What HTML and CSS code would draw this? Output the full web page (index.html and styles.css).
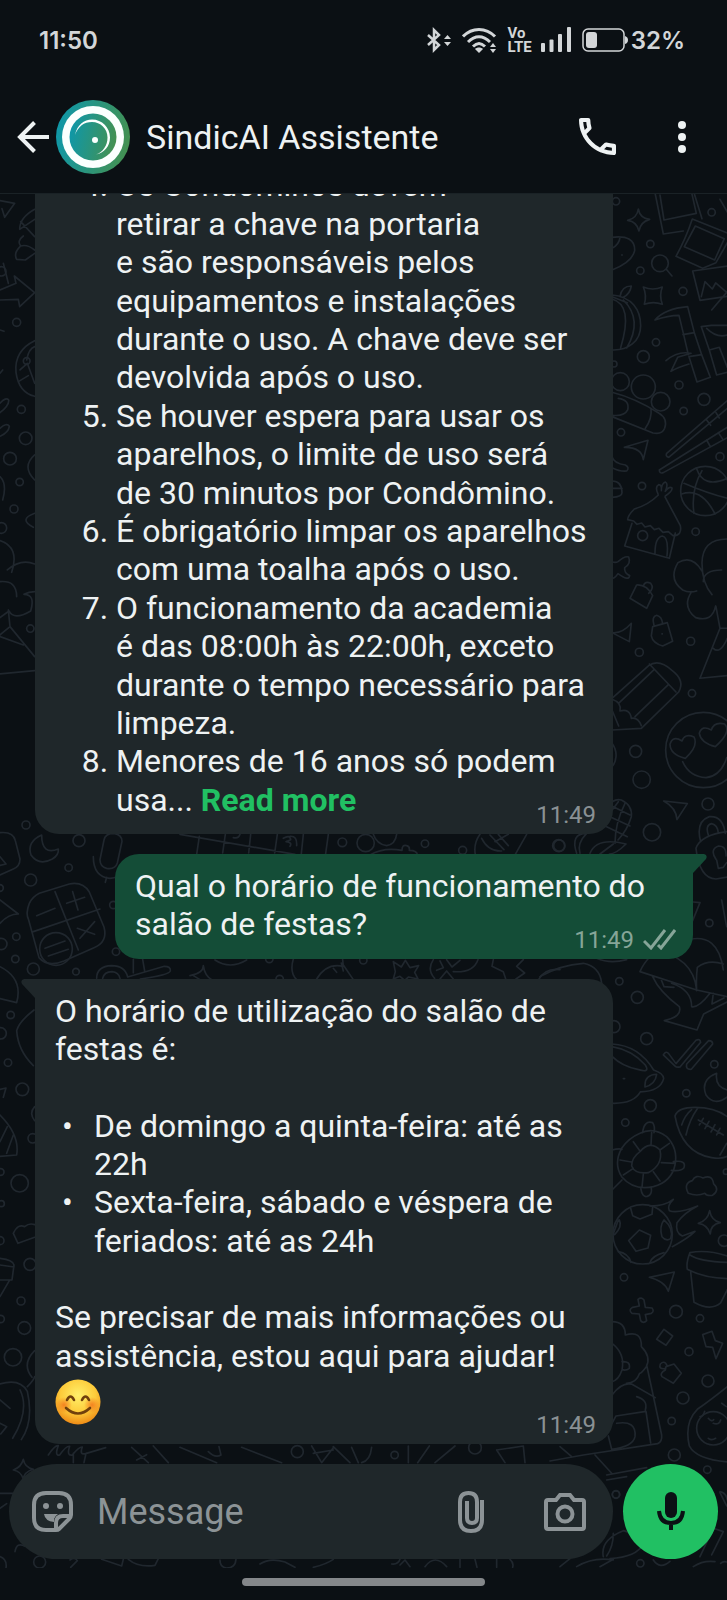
FILE: index.html
```html
<!DOCTYPE html>
<html lang="pt-BR">
<head>
    <meta charset="UTF-8">
    <meta name="viewport" content="width=device-width, initial-scale=1.0">
    <title>SindicAI Assistente</title>
    <link rel="stylesheet" href="styles.css">
</head>
<body>
    <div class="status-bar">
        <span>11:50</span>
        <div class="status-icons">
            <svg class="icon-bluetooth" viewBox="0 0 24 26" fill="none" stroke="currentColor" stroke-width="2.500">
                <path d="M1 8l11 10-5 5V3l5 5L1 18"/>
                <path d="M17 12l3.500-4 3.500 4zM17 15l3.500 4 3.500-4z" fill="currentColor" stroke="none"/>
            </svg>
            <svg class="icon-wifi" viewBox="0 0 35 26" fill="none" stroke="currentColor" stroke-width="3">
                <path d="M1 9.500c9-9.500 23-9.500 32 0M6 15c7-7 15-7 22 0M11 19.500c4-4 8-4 12 0"/>
                <path d="M13 22c2-2 6-2 8 0l-4 4zM28 20l3-4 3 4zM28 22l3 4 3-4z" fill="currentColor" stroke="none"/>
            </svg>
            <span class="volte">Vo<br>LTE</span>
            <svg class="icon-signal" viewBox="0 0 30 26" fill="currentColor">
                <rect y="16" width="4" height="9" rx="1"/>
                <rect x="8.500" y="12.500" width="4" height="12.500" rx="1"/>
                <rect x="17" y="7" width="4" height="18" rx="1"/>
                <rect x="26" width="4" height="25" rx="1"/>
            </svg>
            <svg class="icon-battery" viewBox="0 0 46 24">
                <rect x="1" y="1" width="41" height="22" rx="5" fill="none" stroke="currentColor" stroke-width="1.500"/>
                <rect x="4" y="4" width="11" height="16" rx="3" fill="currentColor"/>
                <path d="M43 8q3 1 3 4t-3 4z" fill="currentColor"/>
            </svg>
            <span>32%</span>
        </div>
    </div>

    <header class="chat-header">
        <button class="icon-button" type="button" aria-label="Voltar">
            <svg class="icon-back" viewBox="0 0 32 32" fill="none" stroke="currentColor" stroke-width="4">
                <path d="M32 16H3M17.500 1.500L3 16l14.500 14.500"/>
            </svg>
        </button>
        <svg class="avatar" viewBox="0 0 74 74">
            <defs>
                <linearGradient id="brand" x1="0" y1="0.400" x2="1" y2="0.600">
                    <stop offset="0" stop-color="#0f97a8"/>
                    <stop offset="1" stop-color="#459150"/>
                </linearGradient>
            </defs>
            <circle cx="37" cy="37" r="37" fill="url(#brand)"/>
            <circle cx="37" cy="37" r="31" fill="#fbfffe"/>
            <circle cx="37" cy="37" r="23.500" fill="url(#brand)"/>
            <path d="M19 35C21 25 28 19.500 36 19.500c10 0 18 8 18 18 0 9-6 15.500-14 17 7-2.500 11.500-9 11.500-17 0-9-7-15.500-15.500-15.500-8 0-14 4.500-17 13z" fill="#fbfffe"/>
            <circle cx="39" cy="40" r="3" fill="#fbfffe"/>
        </svg>
        <h1 class="contact-name">SindicAI Assistente</h1>
        <button class="icon-button" type="button" aria-label="Ligar">
            <svg class="icon-phone" viewBox="3 3 18 18" fill="currentColor">
                <path d="M6.540 5c.06.890.210 1.760.450 2.590l-1.200 1.200c-.410-1.200-.670-2.470-.760-3.790h1.510m9.860 12.020c.850.240 1.720.390 2.600.450v1.490c-1.320-.090-2.590-.350-3.800-.750l1.200-1.190M7.500 3H4c-.550 0-1 .450-1 1 0 9.390 7.610 17 17 17 .550 0 1-.450 1-1v-3.490c0-.550-.450-1-1-1-1.240 0-2.450-.2-3.570-.570-.1-.040-.210-.050-.310-.050-.260 0-.510.1-.710.290l-2.200 2.200c-2.830-1.450-5.150-3.760-6.590-6.590l2.200-2.200c.280-.280.360-.670.250-1.020C8.700 6.450 8.500 5.250 8.500 4c0-.550-.450-1-1-1z"/>
            </svg>
        </button>
        <button class="icon-button menu-button" type="button" aria-label="Mais opções">
            <svg class="icon-menu" viewBox="0 0 10 32" fill="currentColor">
                <circle cx="5" cy="4" r="4"/>
                <circle cx="5" cy="16" r="4"/>
                <circle cx="5" cy="28" r="4"/>
            </svg>
        </button>
    </header>

    <main class="chat">
        <svg class="wallpaper" viewBox="0 194 727 1374" preserveAspectRatio="xMidYMid slice" aria-hidden="true">
            <!-- right side, top -->
            <g transform="translate(540 190) scale(.3333)">
                <circle cx="228" cy="34" r="11"/><circle cx="515" cy="67" r="11"/><circle cx="331" cy="162" r="11"/>
                <circle cx="301" cy="242" r="11"/><circle cx="429" cy="304" r="12"/><circle cx="348" cy="457" r="11"/>
                <circle cx="310" cy="500" r="18"/><circle cx="417" cy="585" r="12"/><circle cx="492" cy="628" r="18"/>
                <circle cx="431" cy="663" r="11"/><circle cx="243" cy="727" r="11"/><circle cx="540" cy="800" r="12"/>
                <circle cx="306" cy="888" r="11"/><circle cx="467" cy="1025" r="11"/><circle cx="388" cy="1225" r="12"/>
                <circle cx="452" cy="1354" r="12"/><circle cx="298" cy="1387" r="12"/><circle cx="222" cy="522" r="9"/>
                <path d="M295 57q5 28 34 31-28 8-32 35-6-28-34-32 28-6 32-34z"/>
                <path d="M345 8l25 124 60-9M462 8l24 78M360 15l12 75 97-20-14-62"/>
                <path d="M457 87l105 42M457 87q-20 60-49 112l80 36 40-17 34-60M466 108l87 38-29 64-91-40z"/>
                <path d="M540 28l22 38M562 228l-104 15 22 88 82-12M484 320l11-45 22 22 10-18 35 30M515 360l47-55"/>
                <circle cx="360" cy="220" r="25"/><path d="M379 238l17 20"/>
                <path d="M310 291q28 12 57 0-10 25 0 52-27-10-54 0 8-27-3-52z"/>
                <path d="M216 142q70-8 68 40-8 35-68 58M216 175q22-12 24-33M245 195h2"/>
                <path d="M216 315c60 5 86 45 86 92s-38 75-86 73M216 327q65 18 26 146M250 330q60 60 10 144M240 320q5-32 34-32-4 24-24 34M216 320l46 18"/>
                <path d="M345 390q30-34 98-40l20 78-34 6M345 390q40-14 72-14l14 58 14 60M463 428l22 66-38 6 24 76 40-14-26-68M378 512q35-30 75-22l-40 12-20 42q20-12 54-22M484 410l24 70 22 75 32-8M484 410l30-4 48 0M500 415q30 30 62 20M508 480l30-8 24 60"/>
                <circle cx="241" cy="575" r="27"/><circle cx="310" cy="591" r="36"/><circle cx="362" cy="635" r="28"/>
                <path d="M216 607q70 18 140 62 28 16 18 46-8 20-35 14l-123-49M235 625q35 5 28 35-10 20-46 16M333 655q4 30-17 60"/>
                <path d="M562 632L380 790q-4 10 6 12L562 655M562 712L358 840q0 12 12 8l192-105M500 690l12 16M528 668l10 16M500 750l10 18M535 728l12 18"/>
                <path d="M253 772l71-21-14 58q-5-38-57-37z"/>
                <path d="M216 800q5 20 40 25 14 8 4 18-20 2-44-10M216 873q30 0 30 35 0 12-30 14M216 895h30"/>
                <circle cx="496" cy="903" r="74"/>
                <path d="M432 880q70 30 130 45M470 836q20 60 90 30M425 912q60-20 100 60M462 970q-10-70 24-128"/>
                <path d="M355 915q-30 30-72 42-20 20-20 32l18 4 10 10 14-4 10 12 16-4 12 12 14-4 12 12 16-2 14 12q28 0 22-30l-46-86M354 912q-10-22 2-28 10 0 8 18 0-22 12-26 10 4 0 28 12-16 20-10 2 10-20 24M276 1000l-22 68 134 37 18-76M345 1090q0-48 22-52 20 4 14 60"/>
                <circle cx="308" cy="1037" r="15"/>
                <path d="M216 1115q10 5 18 0 20-18 32-14 8 20-12 32-2 16 15 24-2 18-35-6-14 20-18 10"/>
                <path d="M562 1047q-75 0-76 72 0 60 30 95M486 1143q-30-50-72-25-30 50 14 82 20 10 42 3M455 1205q-30 45 12 78 50 15 60-35M490 1175q0-35 55-35M528 1250l12 65h22M540 1315l-60 150 82-8M520 1375q20 20 42-30"/>
                <path d="M290 1185q30-2 48 32l-18 38-50-30zM310 1188q5-16 22-8 12 15-6 30"/>
                <path d="M338 1310l44-12 16 56-30 14q-30-8-34-30zM342 1306q-8-26 8-30 16 4 18 26M366 1332h1M216 1328q30 4 58-28l-6 55z"/>
            </g>
            <!-- right side, middle -->
            <g transform="translate(540 660) scale(.3333)">
                <circle cx="456" cy="100" r="11"/><circle cx="287" cy="274" r="18"/><circle cx="305" cy="359" r="26"/>
                <circle cx="504" cy="432" r="18"/><circle cx="336" cy="517" r="26"/><circle cx="58" cy="557" r="17"/>
                <circle cx="508" cy="789" r="11"/><circle cx="238" cy="964" r="11"/><circle cx="292" cy="1012" r="18"/>
                <circle cx="320" cy="1136" r="18"/><circle cx="523" cy="1213" r="11"/><circle cx="439" cy="1300" r="11"/>
                <circle cx="331" cy="1337" r="18"/><circle cx="256" cy="1388" r="11"/><circle cx="222" cy="1100" r="18"/>
                <path d="M216 115l110-98q30-22 70 14 40 30 20 65L304 205l-88 5M216 118q30 10 24 35 30-8 34 22 20-4 30 22M238 128l105-100M285 170l100-96M328 12l80 84M216 150l20 48"/>
                <circle cx="490" cy="270" r="113"/>
                <path d="M436 295q-45-10-46-42 8-28 36-10 8-24 36-12 14 28-26 64zM526 260q-44-12-48-40 8-26 36-10 8-26 40-18 22 24-28 68zM428 305q20 45 70 48 45-5 62-60"/>
                <path d="M371 423l71 8-31 48q-2-36-40-56z"/>
                <path d="M216 250q14 20 12 40-2 20-12 30"/>
                <path d="M208 440q10-25 36-20 34 16 30 50-12 40-40 70M190 480q20-20 45-55M200 500l62 30M210 470l60 28M220 440l50 25M225 550q0-60 30-120M110 580q-20-60 30-60-30 30-20 60M150 580q20-50 108-28-30 30-50 30M180 582l40-30"/>
                <path d="M482 545q-16-60 26-75 40-4 48 50M505 525q-10-30 10-34 18 4 20 28M562 515q-80 10-94 50 10 90 60 92l34-6M530 600l5 25 15-3 10-14M528 598q-20-30 8-40 24 0 22 30"/>
                <path d="M480 728l-22 54M480 728l-20-2M545 720l15 80"/>
                <path d="M440 840q95-25 110 90M550 912q-45-15-78 10-4 30-2 70M340 870q120 20 130 120l-170-55q10-25 35-50M470 990l92 20M338 950q20 45 80 90 10 30-45 42l98 28 20-48 70-36M362 955l10 25 30 2M395 970q60 20 60 70 20 5 55-40M520 1000l-4 32 36-18"/>
                <path d="M0 950q60-35 130-40 50 10 55 60M170 895q40 18 90 4M216 1160q60 10 100 55 15 25-20 14-50-10-80-40M216 1152q80 4 125 78 30 10 30 26-10 38-70 40-20 36-85 34M315 1275q0-30 35-32-4 30-35 38zM250 1256h4"/>
                <path d="M370 1185q8-14 16-4l22 30 60-70q12-6 14 6l-62 74q-10 2-14-2zM440 1212l66-70q12 0 12 10l-64 76q-18 2-14-16z"/>
                <path d="M530 1240q-50 20-32 65 25 35 64 6M530 1240q-6 40 32 50"/>
            </g>
            <!-- right side, bottom -->
            <g transform="translate(540 1100) scale(.3333)">
                <circle cx="480" cy="655" r="11"/><circle cx="252" cy="532" r="11"/><circle cx="408" cy="635" r="19"/>
                <circle cx="447" cy="755" r="12"/><circle cx="504" cy="843" r="18"/><circle cx="429" cy="894" r="18"/>
                <circle cx="395" cy="963" r="11"/><circle cx="403" cy="1065" r="18"/><circle cx="502" cy="1109" r="11"/>
                <circle cx="558" cy="215" r="8"/><circle cx="552" cy="422" r="17"/><circle cx="228" cy="1183" r="11"/>
                <path d="M405 48q8-26 60-26 60 0 97 28M405 48q20 110 110 125 30 5 47-4M425 75q10-30 30-46M438 105q10-45 35-80M475 60l75 45M478 75l12-20M495 86l12-22M513 96l12-22M530 105l10-20M540 165l20-35"/>
                <path d="M216 150q20-5 30-2M300 100q40-20 80 10 35 35 25 85-10 50-65 65-60 12-95-30-25-40 0-85 20-30 55-45zM300 155q30-35 60-5 10 45-35 68-40 5-50-20 0-25 25-43zM308 98q4-38 30-30 8 10 4 30M400 185q40-6 32 18-10 12-38 8M302 264q5 30 20 25 15-4 12-26M280 125l20 28M335 98l-2 38M360 150l28-20M364 188l40 2M340 215l20 28M310 222l-4 40M240 180l34 6M250 225l30-20M216 270l30-30"/>
                <path d="M445 280q-16-30 12-38 10-20 32-8 28-12 32 18 20 18-4 34-18 2-22-6-24 10-50 0z"/>
                <circle cx="308" cy="403" r="89"/>
                <path d="M298 390l34 16-8 38-36 10-22-32zM272 325l6 22 22 10 36-14 2-22M235 360l-16 44M238 360q10 20-14 44M372 360q-15 20-6 50 12 15 26 6 10-30-20-56zM235 455q30 5 38 32M330 488q5-20 42-30M330 318q45 0 70-20-20 20-12 34 25 10 85-14-40 20-62 50-6 30 16 40l38-14q-20 20-68 46"/>
                <path d="M509 332q5 30 32 36-30 6-30 34-8-28-36-32 28-8 34-38z"/>
                <path d="M450 458q50-10 112 10M450 458q-12 30-8 50 50 26 120 28M452 515l10 92q50 28 80 2l20-40M450 465q30 20 112 22"/>
                <path d="M328 532l75-16-18 58q-10-30-57-42z"/>
                <path d="M294 598q10-8 18 2l4 22 20 2q8 10-2 16l-18 4 4 18q-10 10-18 0l-4-20-22-2q-12-10 2-18l20-4zM372 688l26 20-20 28-28-18zM488 704l28-10 10 28 22 8-20 46-10-34-20-2zM378 800l24-8 22 28-24 30-34-20q-8-10 10-20zM375 806q-20 2-14-14 12-12 20 4"/>
                <path d="M216 665q40 0 40 40 50-15 48 35 30 30 15 60-15 20-20 20-10 30-40 30M216 730q40 30 30 80-10 30-30 35M246 785q26-2 22 20-10 8-22 4M216 885q30-40 60-32l70 40M320 795l45 210q2 20-12 26L130 1065l-100 18M216 970l12-22 90-14 14 95M290 890q35 10 26 40M230 970q60-10 55 40-6 30-70 38l-10-40"/>
                <path d="M60 1040l35 30M165 1065l50 55M200 1125l120-22M200 1140l60-10"/>
                <path d="M562 860q-50 40-90 68-40 40-24 110 20 40 114 48"/><circle cx="520" cy="985" r="50"/>
                <path d="M505 955q10 12 16 4M520 970q18 6 22-10M505 1015q10 8 22 0M480 950q10 0 14-16M545 910l14 10M540 1175q20 5 22 25"/>
            </g>
            <!-- left side, top -->
            <g transform="translate(0 180) scale(.3333)">
                <circle cx="50" cy="427" r="12"/><circle cx="64" cy="688" r="12"/><circle cx="77" cy="775" r="19"/>
                <circle cx="30" cy="836" r="19"/><circle cx="59" cy="906" r="11"/><circle cx="42" cy="987" r="12"/>
                <circle cx="4" cy="1044" r="16"/><circle cx="91" cy="1346" r="11"/><circle cx="4" cy="274" r="14"/>
                <path d="M0 62l44 8-30 42-8-26M104 88q-45 25-45 60l45-30M62 125l42 45M70 168q-20 15-8 30 20-6 42 12M60 200q-20 20-10 38l26 2 28-20M0 330l48-20-5-22 61 50-45 42-4-22-55 2M10 250l15 60M0 580l8-10M0 450l12 4"/>
                <path d="M104 482q-62 30-56 95 8 60 56 72M80 540q6-34 24-40M60 570l22-20 22 60M55 605l30-18"/><circle cx="80" cy="543" r="10"/>
                <path d="M0 670q18-20 26-10 2 16-26 38M0 745q20-18 28-6-2 18-28 30M104 825q-40 35 0 75M104 1000q-50 18-4 42M0 890q22 22 8 70M0 1082q60 20 35 95M22 1170q40-35 82-18M0 1205q50-5 50 45M104 1235q-18 0-32 8 35 0 20 50-50 30-65 0l-27 20M25 1290l5 50 74 90M30 1340l-30 25M0 1370l70 25M0 1482l104-10"/>
            </g>
            <!-- left side, middle -->
            <g transform="translate(0 820) scale(.3333)">
                <circle cx="78" cy="15" r="12"/><circle cx="237" cy="62" r="18"/><circle cx="206" cy="143" r="11"/>
                <circle cx="92" cy="180" r="18"/><circle cx="4" cy="372" r="17"/><circle cx="49" cy="350" r="11"/>
                <circle cx="46" cy="417" r="11"/><circle cx="100" cy="447" r="18"/><circle cx="228" cy="455" r="10"/>
                <circle cx="348" cy="395" r="11"/><circle cx="32" cy="585" r="11"/><circle cx="24" cy="728" r="11"/>
                <circle cx="2" cy="640" r="17"/><circle cx="340" cy="255" r="11"/><circle cx="0" cy="204" r="10"/>
                <path d="M0 38q40-4 46 24l14 55q0 22-20 30L0 165M0 110l18 22-18 4"/>
                <path d="M125 45q-45 20-32 60 24 34 64 12 20-12 18-30-50 20-50-42z"/>
                <path d="M0 240l55 42q-30 0-55 28"/>
                <path d="M88 250q10-20 30-30l90-28q40-8 60 24l44 105q12 45-30 62l-90 40q-50 20-75-10L86 300q-10-20 2-50zM165 215l70 175M100 335l200-68M110 287l55-22M200 250l54-18M218 215l16 55M232 325l52 18M240 355l44-50M135 385l60-22M145 408l60-20"/><circle cx="168" cy="387" r="49"/>
                <path d="M312 60q4-20 30-20 24 4 24 24l-14 65q-6 20-32 16-20-6-20-26zM280 110q0 60 50 65 25 0 45-25M320 172l-4 15"/>
                <path d="M290 475q0-36 45-38 40 0 48 34l110-32q20 0 18 14-4 12-90 24M308 475q5-20 28-20 20 2 24 20M400 418v40M428 418l6 35"/>
                <path d="M0 440q70 35 50 108l-50-12M102 570q-45 35-52 62 4 60 50 105"/>
            </g>
            <!-- left side, bottom -->
            <g transform="translate(0 1000) scale(.3333)">
                <circle cx="67" cy="268" r="19"/><circle cx="59" cy="550" r="26"/><circle cx="90" cy="793" r="18"/>
                <circle cx="63" cy="903" r="12"/><circle cx="73" cy="984" r="19"/><circle cx="39" cy="1072" r="26"/>
                <circle cx="2" cy="516" r="10"/><circle cx="0" cy="722" r="12"/><circle cx="2" cy="957" r="11"/>
                <circle cx="98" cy="415" r="14"/><circle cx="4" cy="611" r="9"/>
                <path d="M0 268l18-4-8 28M0 345q60 60 50 120l-50 4M0 425l22-45M20 460l20-55M40 700q14-30 34-20 14-12 30-6M40 700l14 30 50-18M0 775q40 5 42 20l-6 45H0M0 795l42 6M28 842L0 890M104 320q-18 20 0 42"/>
                <path d="M0 1152q60-18 82 22 20 90-18 145M82 1160q20-20 22-30M104 1052q-40 40-8 80M0 1200l30 25M0 1270l20 10-18 22M60 1170q30 60-22 145"/>
            </g>
            <!-- strip around the composer -->
            <g transform="translate(0 1360) scale(.3333)">
                <circle cx="892" cy="275" r="18"/><circle cx="1184" cy="285" r="11"/><circle cx="119" cy="606" r="18"/>
                <path d="M145 285q20-30 30-28-12 32 4 28 20-28 30-26-10 30 8 26 20-25 30-24-10 25 10 20l60-18M220 280v28M258 280l-6 28M70 298q4 24 30 30-28 8-30 30-6-24-30-28 24-8 30-32z"/>
                <path d="M395 262l50 46M460 258l45 50M410 300l30-16M540 262l110 46M625 275q20 20 38 10l-6-25M725 262l120 46M935 258l30 50 35-45M1000 260l50 48M1055 262l20 46M1115 262q-4 40-30 46M940 280l60-10"/>
                <path d="M0 400h40M0 445l20-14M45 575q5-30 30-16M0 590q22 8 18 34M210 600q14-10 22 2l-20 20M305 598l60 20 5-20M385 598q30 25 80 18l10-20M660 600q0 22 20 24 26 0 28-26M780 612q30-20 75-6l30 16M940 622q40-10 60-24M1175 612q20 2 25-14"/>
            </g>
            <g transform="translate(400 1400) scale(.3333)">
                <circle cx="225" cy="143" r="19"/><circle cx="721" cy="490" r="11"/><circle cx="648" cy="284" r="11"/>
                <path d="M25 138v50M88 138l-35 50M165 138l-60 50M290 150l80-12 5 50M290 150l25 38M610 470q-10-50 60-78 50 12 60 40-20 40-100 44M640 400q0 40-20 68M900 470l40-85 30 10-35 70M960 278l20 40"/>
                <path d="M0 495l15-15 15 20M75 500q30-40 65 0M180 478v24M225 478l6 24M290 478v24M330 478q12 10 8 24M480 500l30-24M530 500q50-30 110-20M600 500l40-22M760 480q20 30 50 4M880 500q30-20 65-15M962 490q8-8 18-4"/>
            </g>
            <!-- between the bubbles -->
            <g transform="translate(180 825) scale(.3333)">
                <circle cx="487" cy="52" r="13"/><circle cx="557" cy="54" r="26"/><circle cx="735" cy="56" r="11"/>
                <circle cx="848" cy="76" r="12"/><circle cx="550" cy="406" r="11"/><circle cx="268" cy="402" r="11"/>
                <circle cx="299" cy="462" r="11"/><circle cx="1136" cy="62" r="18"/>
                <path d="M0 28l345 60M58 34l-8 54M136 28l-8 56M212 28l-6 56M292 28l-8 56M370 28l-6 58M445 28l-8 58M160 38q16 4 20-10M310 40q20-12 22 4l-14 6q20 2 12 14M330 34q22-2 20 28"/>
                <path d="M580 28q10 30 40 34 26-4 30-34M570 90q40-24 96-14 0-18 14-14 10 2 8 14 24 0 24 14M900 28q-20 28-14 60M1040 28l-34 60M905 40q20 40 60 38M930 30l42 44M955 28l30 34M985 28l-40 22"/>
                <path d="M30 452q40-8 40-30 4 30 25 42M40 452l20 12M105 405q45 30 95 0M340 402q-12 40 10 62M410 462q30-50 80-38l-2-20M460 430l10 12M484 414l6 24M490 420l30 44"/>
                <path d="M640 410l24 16 12-20 14 22 26-6-12 20 10 20-28-6-12 10-14-12-20 8 6-22zM760 404q-20 30 4 56M780 408l10 20-20 8M800 404l16 22 24-20M820 440q60 4 74-36M780 462l20-24 20 24M940 404l-4 20 34 16 8 24M1030 404l-20 20 24 20-26 18M1076 464q20-36 64-30"/>
            </g>
        </svg>

        <div class="messages">
            <article class="message received">
                <ol class="rules" start="4">
                    <li>Os Condôminos devem<br>retirar a chave na portaria<br>e são responsáveis pelos equipamentos e instalações durante o uso. A chave deve ser devolvida após o uso.</li>
                    <li>Se houver espera para usar os aparelhos, o limite de uso será<br>de 30 minutos por Condômino.</li>
                    <li>É obrigatório limpar os aparelhos com uma toalha após o uso.</li>
                    <li>O funcionamento da academia<br>é das 08:00h às 22:00h, exceto durante o tempo necessário para limpeza.</li>
                    <li>Menores de 16 anos só podem usa... <a class="read-more" href="#">Read more</a></li>
                </ol>
                <time class="meta">11:49</time>
            </article>

            <article class="message sent">
                <svg class="tail" viewBox="0 0 14 22"><path d="M0 0h11q4 1 2 5L0 19z"/></svg>
                <p>Qual o horário de funcionamento do salão de festas?</p>
                <div class="meta">
                    <time>11:49</time>
                    <svg class="icon-read" viewBox="0 0 33 21" fill="none" stroke="currentColor" stroke-width="3">
                        <path d="M1 12l7 7L22 1M15 16l3 3L32 1"/>
                    </svg>
                </div>
            </article>

            <article class="message received">
                <svg class="tail" viewBox="0 0 14 22"><path d="M14 0H3q-4 1-2 5l13 14z"/></svg>
                <p>O horário de utilização do salão de festas é:</p>
                <ul class="hours">
                    <li>De domingo a quinta-feira: até as<br>22h</li>
                    <li>Sexta-feira, sábado e véspera de feriados: até as 24h</li>
                </ul>
                <p>Se precisar de mais informações ou assistência, estou aqui para ajudar!</p>
                <svg class="emoji" viewBox="0 0 46 46" role="img" aria-label="😊">
                    <defs>
                        <radialGradient id="face" cx=".5" cy=".35" r=".65">
                            <stop offset="0" stop-color="#fff06a"/>
                            <stop offset=".6" stop-color="#fdcb3a"/>
                            <stop offset="1" stop-color="#ee8b16"/>
                        </radialGradient>
                        <radialGradient id="blush">
                            <stop offset="0" stop-color="#f2701a" stop-opacity=".8"/>
                            <stop offset="1" stop-color="#f2701a" stop-opacity="0"/>
                        </radialGradient>
                    </defs>
                    <circle cx="23" cy="23" r="22.500" fill="url(#face)"/>
                    <circle cx="9" cy="26" r="8" fill="url(#blush)"/>
                    <circle cx="37" cy="26" r="8" fill="url(#blush)"/>
                    <path d="M12 21q3.500-7 7 0M27 21q3.500-7 7 0M11 29q12 11 24 0" fill="none" stroke="#70400c" stroke-width="2.600" stroke-linecap="round"/>
                </svg>
                <time class="meta">11:49</time>
            </article>
        </div>

        <form class="composer">
            <div class="input-pill">
                <button class="icon-button" type="button" aria-label="Figurinhas">
                    <svg class="icon-sticker" viewBox="0 0 42 42" fill="none" stroke="currentColor" stroke-width="4">
                        <path d="M24 39H14Q2 39 2 27V14Q2 2 14 2h13q12 0 12 12v10q0 2-2 4L27 38q-1 1-3 1z"/>
                        <path d="M24 39v-7q0-7 7-7h8"/>
                        <path d="M12 23h14q-3 2-4 5v3q-9-1-10-8z" fill="currentColor" stroke="none"/>
                        <circle cx="14" cy="15" r="3" fill="currentColor" stroke="none"/>
                        <circle cx="28" cy="15" r="3" fill="currentColor" stroke="none"/>
                    </svg>
                </button>
                <input class="message-input" type="text" placeholder="Message" aria-label="Message">
                <button class="icon-button" type="button" aria-label="Anexar">
                    <svg class="icon-clip" viewBox="0 0 26 42" fill="none" stroke="currentColor" stroke-width="4">
                        <path d="M24 9v20q0 11-11 11T2 29V11q0-9 8.500-9t8.500 9v16q0 5-5 5t-5-5V10"/>
                    </svg>
                </button>
                <button class="icon-button" type="button" aria-label="Câmera">
                    <svg class="icon-camera" viewBox="0 0 42 38" fill="none" stroke="currentColor" stroke-width="4">
                        <path d="M4 7h8l4-5h10l4 5h8q2 0 2 2v25q0 2-2 2H4q-2 0-2-2V9q0-2 2-2z"/>
                        <circle cx="21" cy="21" r="7.500"/>
                    </svg>
                </button>
            </div>
            <button class="mic-button" type="button" aria-label="Gravar áudio">
                <svg class="icon-mic" viewBox="0 0 28 40" fill="none" stroke="currentColor" stroke-width="4">
                    <rect x="8" y="0" width="12" height="26" rx="6" fill="currentColor" stroke="none"/>
                    <path d="M2 19q1 12 12 12t12-12M14 31v7"/>
                </svg>
            </button>
        </form>
    </main>

    <div class="nav-bar"><span class="nav-handle"></span></div>
</body>
</html>
```

FILE: styles.css
```css
* {
    box-sizing: border-box;
}

body {
    font-family: Roboto, "Liberation Sans", sans-serif;
    background: #0b1014;
    color: #eef2f3;
    margin: 0;
    height: 100vh;
    display: flex;
    flex-direction: column;
    overflow: hidden;
}

button {
    background: none;
    border: none;
    padding: 0;
    color: inherit;
    cursor: pointer;
}

svg {
    display: block;
    flex-shrink: 0;
}

p, ol, ul, h1 {
    margin: 0;
}

.icon-button {
    display: flex;
}

/* status bar */
.status-bar {
    display: flex;
    justify-content: space-between;
    align-items: center;
    height: 80px;
    padding: 0 42px 0 39px;
    font-family: Inter, Roboto, sans-serif;
    font-size: 24px;
    font-weight: 600;
    color: #d3d6d8;
}

.status-icons {
    display: flex;
    align-items: center;
}

.icon-bluetooth {
    width: 24px;
    height: 26px;
    margin-right: 11px;
}

.icon-wifi {
    width: 35px;
    height: 26px;
    margin-right: 10px;
}

.volte {
    font-family: Roboto, sans-serif;
    font-size: 15px;
    font-weight: 700;
    line-height: 14px;
    margin-right: 9px;
}

.icon-signal {
    width: 30px;
    height: 26px;
    margin-right: 11px;
}

.icon-battery {
    width: 46px;
    height: 24px;
    margin-right: 3px;
}

/* header */
.chat-header {
    display: flex;
    align-items: center;
    height: 114px;
    padding: 0 40px 0 17px;
    border-bottom: 1px solid #1a2226;
}

.icon-back {
    width: 32px;
    height: 32px;
}

.avatar {
    width: 74px;
    height: 74px;
    margin: 0 16px 0 7px;
}

.contact-name {
    flex: 1;
    font-size: 34px;
    font-weight: 400;
}

.icon-phone {
    width: 37px;
    height: 37px;
}

.menu-button {
    margin-left: 61px;
}

.icon-menu {
    width: 10px;
    height: 32px;
}

/* chat */
.chat {
    position: relative;
    flex: 1;
    min-height: 0;
    display: flex;
    flex-direction: column;
}

.wallpaper {
    position: absolute;
    inset: 0;
    width: 100%;
    height: 100%;
    fill: none;
    stroke: #20272e;
    stroke-width: 5;
    stroke-linejoin: round;
    stroke-linecap: round;
}

.messages {
    position: relative;
    flex: 1;
    min-height: 0;
    display: flex;
    flex-direction: column;
    justify-content: flex-end;
    gap: 20px;
    padding: 0 34px 20px 35px;
    overflow: hidden;
}

.message {
    position: relative;
    flex-shrink: 0;
    width: calc(100% - 80px);
    padding: 13px 20px 15px;
    border-radius: 24px;
    font-size: 32px;
    line-height: 1.2;
}

.received {
    background: #1f272a;
    border-top-left-radius: 0;
}

.sent {
    align-self: flex-end;
    background: #144d37;
    border-top-right-radius: 0;
}

.tail {
    position: absolute;
    top: 0;
    width: 14px;
    height: 22px;
}

.received .tail {
    right: 100%;
    fill: #1f272a;
}

.sent .tail {
    left: 100%;
    fill: #144d37;
}

.rules {
    padding-left: 61px;
}

.read-more {
    color: #21c063;
    font-weight: 700;
    text-decoration: none;
}

.hours {
    list-style: none;
    padding: 0;
    margin: 38px 0;
}

.hours li {
    display: flex;
}

.hours li::before {
    content: "•";
    flex: 0 0 32px;
    padding-left: 7px;
}

.emoji {
    width: 46px;
    height: 46px;
    margin: 4px 0;
}

.meta {
    position: absolute;
    right: 17px;
    bottom: 7px;
    display: flex;
    align-items: center;
    gap: 9px;
    font-size: 24px;
    line-height: 24px;
    color: #8a9194;
}

.sent .meta {
    color: #86a598;
}

.icon-read {
    width: 33px;
    height: 21px;
}

/* composer */
.composer {
    position: relative;
    display: flex;
    align-items: center;
    gap: 10px;
    padding: 0 9px 9px;
}

.input-pill {
    flex: 1;
    min-width: 0;
    display: flex;
    align-items: center;
    height: 95px;
    padding: 0 27px 0 23px;
    border-radius: 48px;
    background: #1f272a;
    color: #8c9396;
}

.icon-sticker {
    width: 42px;
    height: 42px;
}

.message-input {
    flex: 1;
    min-width: 0;
    padding: 0 23px;
    border: none;
    outline: none;
    background: none;
    color: #eef2f3;
    font-family: inherit;
    font-size: 36px;
}

.message-input::placeholder {
    color: #8c9396;
    opacity: 1;
}

.icon-clip {
    width: 26px;
    height: 42px;
}

.icon-camera {
    width: 42px;
    height: 38px;
    margin-left: 60px;
}

.mic-button {
    display: flex;
    align-items: center;
    justify-content: center;
    width: 95px;
    height: 95px;
    border-radius: 50%;
    background: #21c063;
    color: #0b1014;
}

.icon-mic {
    width: 28px;
    height: 40px;
}

/* system navigation */
.nav-bar {
    display: flex;
    justify-content: center;
    align-items: flex-start;
    height: 32px;
    padding-top: 10px;
}

.nav-handle {
    width: 243px;
    height: 8px;
    border-radius: 4px;
    background: #84878a;
}
```
